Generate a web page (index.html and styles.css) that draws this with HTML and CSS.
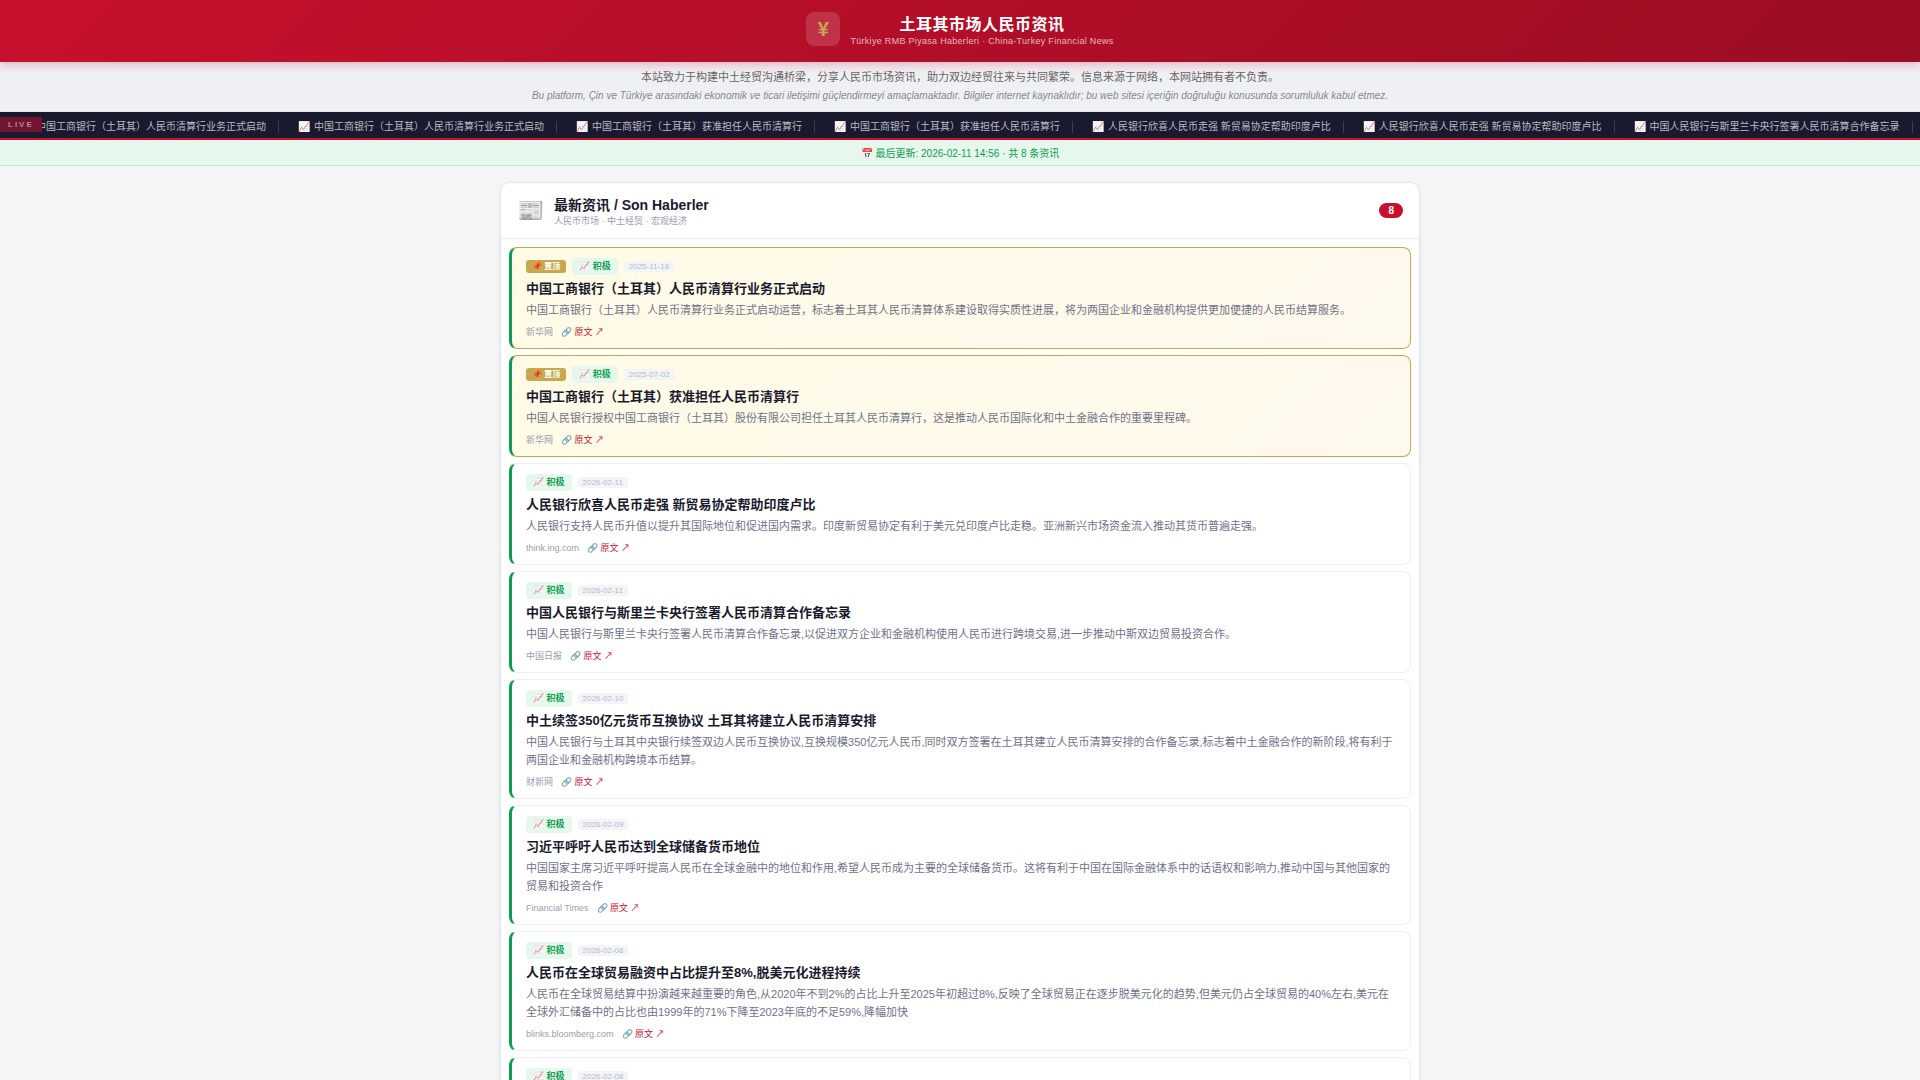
FILE: index.html
```html
<!DOCTYPE html>
<html lang="zh-CN">
<head>
  <meta charset="UTF-8">
  <meta name="viewport" content="width=device-width, initial-scale=1.0">
  <title>土耳其市场人民币资讯</title>
  <link rel="stylesheet" href="styles.css">
</head>
<body>

  <!-- Header -->
  <header class="header">
    <div class="logo">¥</div>
    <div class="header-text">
      <h1>土耳其市场人民币资讯</h1>
      <p>Türkiye RMB Piyasa Haberleri · China-Turkey Financial News</p>
    </div>
  </header>

  <!-- Intro -->
  <section class="intro">
    <p class="intro-cn">本站致力于构建中土经贸沟通桥梁，分享人民币市场资讯，助力双边经贸往来与共同繁荣。信息来源于网络，本网站拥有者不负责。</p>
    <p class="intro-tr" lang="tr">Bu platform, Çin ve Türkiye arasındaki ekonomik ve ticari iletişimi güçlendirmeyi amaçlamaktadır. Bilgiler internet kaynaklıdır; bu web sitesi içeriğin doğruluğu konusunda sorumluluk kabul etmez.</p>
  </section>

  <!-- Ticker -->
  <div class="ticker">
    <span class="live">LIVE</span>
    <div class="ticker-track">
      <span class="ticker-item"><span class="ticker-icon">📈</span>中国工商银行（土耳其）人民币清算行业务正式启动</span>
      <span class="ticker-item"><span class="ticker-icon">📈</span>中国工商银行（土耳其）人民币清算行业务正式启动</span>
      <span class="ticker-item"><span class="ticker-icon">📈</span>中国工商银行（土耳其）获准担任人民币清算行</span>
      <span class="ticker-item"><span class="ticker-icon">📈</span>中国工商银行（土耳其）获准担任人民币清算行</span>
      <span class="ticker-item"><span class="ticker-icon">📈</span>人民银行欣喜人民币走强 新贸易协定帮助印度卢比</span>
      <span class="ticker-item"><span class="ticker-icon">📈</span>人民银行欣喜人民币走强 新贸易协定帮助印度卢比</span>
      <span class="ticker-item"><span class="ticker-icon">📈</span>中国人民银行与斯里兰卡央行签署人民币清算合作备忘录</span>
    </div>
  </div>

  <div class="update-bar">📅 最后更新: 2026-02-11 14:56 · 共 8 条资讯</div>

  <!-- News -->
  <main class="container">
    <section class="card">
      <div class="card-header">
        <span class="card-icon">📰</span>
        <div class="card-title">
          <h2>最新资讯 / Son Haberler</h2>
          <p>人民币市场 · 中土经贸 · 宏观经济</p>
        </div>
        <span class="count">8</span>
      </div>

      <div class="news-list">
        <article class="news-item pinned">
          <div class="tags">
            <span class="tag-pin">📌 置顶</span>
            <span class="tag-positive">📈 积极</span>
            <span class="date">2025-11-18</span>
          </div>
          <h3>中国工商银行（土耳其）人民币清算行业务正式启动</h3>
          <p class="summary">中国工商银行（土耳其）人民币清算行业务正式启动运营，标志着土耳其人民币清算体系建设取得实质性进展，将为两国企业和金融机构提供更加便捷的人民币结算服务。</p>
          <div class="meta"><span>新华网</span><a href="#">🔗 原文 ↗</a></div>
        </article>

        <article class="news-item pinned">
          <div class="tags">
            <span class="tag-pin">📌 置顶</span>
            <span class="tag-positive">📈 积极</span>
            <span class="date">2025-07-02</span>
          </div>
          <h3>中国工商银行（土耳其）获准担任人民币清算行</h3>
          <p class="summary">中国人民银行授权中国工商银行（土耳其）股份有限公司担任土耳其人民币清算行，这是推动人民币国际化和中土金融合作的重要里程碑。</p>
          <div class="meta"><span>新华网</span><a href="#">🔗 原文 ↗</a></div>
        </article>

        <article class="news-item">
          <div class="tags">
            <span class="tag-positive">📈 积极</span>
            <span class="date">2026-02-11</span>
          </div>
          <h3>人民银行欣喜人民币走强 新贸易协定帮助印度卢比</h3>
          <p class="summary">人民银行支持人民币升值以提升其国际地位和促进国内需求。印度新贸易协定有利于美元兑印度卢比走稳。亚洲新兴市场资金流入推动其货币普遍走强。</p>
          <div class="meta"><span>think.ing.com</span><a href="#">🔗 原文 ↗</a></div>
        </article>

        <article class="news-item">
          <div class="tags">
            <span class="tag-positive">📈 积极</span>
            <span class="date">2026-02-11</span>
          </div>
          <h3>中国人民银行与斯里兰卡央行签署人民币清算合作备忘录</h3>
          <p class="summary">中国人民银行与斯里兰卡央行签署人民币清算合作备忘录,以促进双方企业和金融机构使用人民币进行跨境交易,进一步推动中斯双边贸易投资合作。</p>
          <div class="meta"><span>中国日报</span><a href="#">🔗 原文 ↗</a></div>
        </article>

        <article class="news-item">
          <div class="tags">
            <span class="tag-positive">📈 积极</span>
            <span class="date">2026-02-10</span>
          </div>
          <h3>中土续签350亿元货币互换协议 土耳其将建立人民币清算安排</h3>
          <p class="summary">中国人民银行与土耳其中央银行续签双边人民币互换协议,互换规模350亿元人民币,同时双方签署在土耳其建立人民币清算安排的合作备忘录,标志着中土金融合作的新阶段,将有利于两国企业和金融机构跨境本币结算。</p>
          <div class="meta"><span>财新网</span><a href="#">🔗 原文 ↗</a></div>
        </article>

        <article class="news-item">
          <div class="tags">
            <span class="tag-positive">📈 积极</span>
            <span class="date">2026-02-09</span>
          </div>
          <h3>习近平呼吁人民币达到全球储备货币地位</h3>
          <p class="summary">中国国家主席习近平呼吁提高人民币在全球金融中的地位和作用,希望人民币成为主要的全球储备货币。这将有利于中国在国际金融体系中的话语权和影响力,推动中国与其他国家的贸易和投资合作</p>
          <div class="meta"><span>Financial Times</span><a href="#">🔗 原文 ↗</a></div>
        </article>

        <article class="news-item">
          <div class="tags">
            <span class="tag-positive">📈 积极</span>
            <span class="date">2026-02-08</span>
          </div>
          <h3>人民币在全球贸易融资中占比提升至8%,脱美元化进程持续</h3>
          <p class="summary">人民币在全球贸易结算中扮演越来越重要的角色,从2020年不到2%的占比上升至2025年初超过8%,反映了全球贸易正在逐步脱美元化的趋势,但美元仍占全球贸易的40%左右,美元在全球外汇储备中的占比也由1999年的71%下降至2023年底的不足59%,降幅加快</p>
          <div class="meta"><span>blinks.bloomberg.com</span><a href="#">🔗 原文 ↗</a></div>
        </article>

        <article class="news-item">
          <div class="tags">
            <span class="tag-positive">📈 积极</span>
            <span class="date">2026-02-08</span>
          </div>
        </article>
      </div>
    </section>
  </main>

</body>
</html>
```

FILE: styles.css
```css
* {
  margin: 0;
  padding: 0;
  box-sizing: border-box;
}

body {
  font-family: "Liberation Sans", "Noto Sans CJK SC", sans-serif;
  background: #f4f5f7;
  color: #1a1a2e;
}

/* Header */
.header {
  position: relative;
  z-index: 2;
  display: flex;
  justify-content: center;
  align-items: center;
  gap: 10px;
  padding: 12px 16px 16px;
  background: linear-gradient(135deg, #c8102e, #9b0d23);
  box-shadow: 0 2px 10px rgba(200, 16, 46, 0.3);
  color: white;
}

.logo {
  width: 34px;
  height: 34px;
  border-radius: 8px;
  background: rgba(255, 255, 255, 0.15);
  color: #c9a84c;
  font-size: 20px;
  line-height: 34px;
  font-weight: bold;
  text-align: center;
}

.header-text {
  padding-top: 2px;
  text-align: center;
}

.header h1 {
  font-size: 16px;
  line-height: 22px;
  letter-spacing: 0.5px;
}

.header p {
  font-size: 9px;
  line-height: 10px;
  letter-spacing: 0.3px;
  color: rgba(255, 255, 255, 0.7);
}

/* Intro */
.intro {
  padding: 5px 16px 6px;
  background: #eff0f3;
  border-bottom: 1px solid #e2e5ea;
  text-align: center;
}

.intro-cn {
  font-size: 11px;
  line-height: 20px;
  color: #666;
}

.intro-tr {
  font-size: 10px;
  line-height: 18px;
  font-style: italic;
  color: #888;
}

/* Ticker */
.ticker {
  position: relative;
  padding-top: 4px;
  overflow: hidden;
  background: #1a1a2e;
  border-bottom: 2px solid #c8102e;
}

.live {
  position: absolute;
  left: 0;
  top: 5px;
  z-index: 1;
  padding: 0 8px;
  background: #711530;
  color: #aa8d98;
  font-size: 8px;
  line-height: 15px;
  font-weight: bold;
  letter-spacing: 2px;
}

.ticker-track {
  display: flex;
  width: max-content;
  padding-left: 1px;
}

.ticker-item {
  display: flex;
  align-items: center;
  flex-shrink: 0;
  padding-left: 19px;
  font-size: 10px;
  line-height: 22px;
  color: #babac0;
  white-space: nowrap;
}

.ticker-item::after {
  content: "";
  width: 1px;
  height: 12px;
  margin-left: 12px;
  background: rgba(255, 255, 255, 0.15);
}

.ticker-icon {
  margin-right: 4px;
}

.update-bar {
  padding-top: 3px;
  background: #e6f7ed;
  border-bottom: 1px solid #c5e8d3;
  color: #0f9d4f;
  font-size: 10px;
  line-height: 22px;
  text-align: center;
}

/* News card */
.container {
  max-width: 952px;
  margin: 0 auto;
  padding: 16px;
}

.card {
  background: white;
  border: 1px solid #e2e5ee;
  border-radius: 10px;
  box-shadow: 0 1px 4px rgba(0, 0, 0, 0.06);
}

.card-header {
  display: flex;
  align-items: center;
  gap: 10px;
  height: 56px;
  padding: 0 16px;
  border-bottom: 1px solid #e8eaf2;
}

.card-icon {
  font-size: 22px;
}

.card-title {
  flex: 1;
  padding-top: 2px;
}

.card-title h2 {
  font-size: 14px;
  line-height: 19px;
}

.card-title p {
  font-size: 9px;
  line-height: 13px;
  color: #9a9db0;
}

.count {
  padding: 0 9px;
  border-radius: 10px;
  background: #c8102e;
  color: white;
  font-size: 10px;
  line-height: 15px;
  font-weight: bold;
}

.news-list {
  display: flex;
  flex-direction: column;
  gap: 6px;
  padding: 8px;
}

.news-item {
  padding: 10px 14px 9px;
  border: 1px solid #eeeff3;
  border-left: 3px solid #0f9d4f;
  border-radius: 8px;
}

.pinned {
  background: linear-gradient(135deg, #fffbe6, #fff9ee);
  border-color: #c9a84c;
  border-left-color: #0f9d4f;
}

.tags {
  display: flex;
  align-items: center;
  gap: 6px;
  margin-bottom: 5px;
}

.tag-pin {
  padding: 0 6px;
  border-radius: 3px;
  background: #c9a84c;
  color: white;
  font-size: 8px;
  line-height: 13px;
  font-weight: bold;
}

.tag-positive {
  padding: 0 7px;
  border-radius: 4px;
  background: #e6f7ed;
  color: #0f9d4f;
  font-size: 9px;
  line-height: 17px;
  font-weight: bold;
}

.date {
  padding: 0 5px;
  border-radius: 3px;
  background: #f3f4f7;
  color: #b8bac9;
  font-size: 8px;
  line-height: 11px;
}

.news-item h3 {
  font-size: 13px;
  line-height: 18px;
  margin-bottom: 3px;
}

.summary {
  font-size: 11px;
  line-height: 18px;
  color: #6f7288;
}

.meta {
  display: flex;
  align-items: center;
  gap: 8px;
  margin-top: 7px;
  font-size: 9px;
  line-height: 13px;
  color: #9a9db0;
}

.meta a {
  color: #c8102e;
  text-decoration: none;
}
```
